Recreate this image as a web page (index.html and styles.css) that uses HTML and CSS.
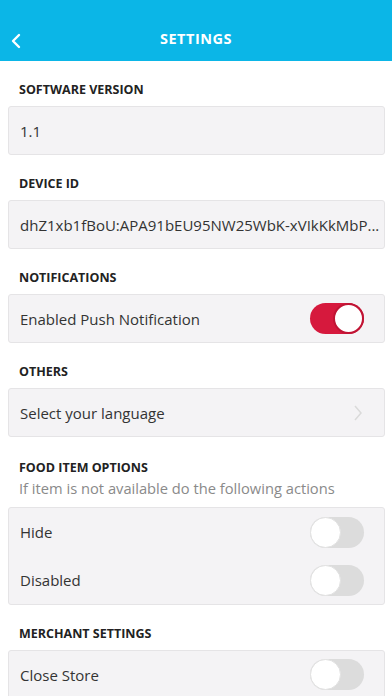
FILE: index.html
```html
<!DOCTYPE html>
<html>
<head>
	<meta charset="utf-8">
	<title>Settings</title>
	<link rel="stylesheet" href="styles.css">
</head>
<body>
	<!-- top bar -->
	<div class="topbar">
		<svg class="back" width="12" height="16" viewBox="0 0 12 16"><path d="M9 2 L3 8 L9 14" fill="none" stroke="#fff" stroke-width="2.4" stroke-linecap="round" stroke-linejoin="round"/></svg>
		<h1>SETTINGS</h1>
	</div>

	<div class="content">
		<div class="label">SOFTWARE VERSION</div>
		<div class="box">
			<div class="row">1.1</div>
		</div>

		<div class="label">DEVICE ID</div>
		<div class="box">
			<div class="row">dhZ1xb1fBoU:APA91bEU95NW25WbK-xVIkKkMbP...</div>
		</div>

		<div class="label">NOTIFICATIONS</div>
		<div class="box">
			<div class="row">Enabled Push Notification <span class="switch on"></span></div>
		</div>

		<div class="label">OTHERS</div>
		<div class="box">
			<div class="row">Select your language
				<svg width="8" height="16" viewBox="0 0 8 16" class="chev"><path d="M1 1 L7 8 L1 15" fill="none" stroke="#dadada" stroke-width="1.5"/></svg>
			</div>
		</div>

		<div class="label with-sub">FOOD ITEM OPTIONS</div>
		<div class="sub">If item is not available do the following actions</div>
		<div class="box multi">
			<div class="row">Hide <span class="switch"></span></div>
			<div class="row">Disabled <span class="switch"></span></div>
		</div>

		<div class="label">MERCHANT SETTINGS</div>
		<div class="box">
			<div class="row">Close Store <span class="switch"></span></div>
		</div>
	</div>
</body>
</html>
```

FILE: styles.css
```css
body{
	margin: 0;
	background: #fff;
	font-family: "Open Sans", "Noto Sans", sans-serif;
	color: #333;
}

/* header */
.topbar{
	height: 61px;
	background-color: #0bb6e7;
	display: flex;
	align-items: center;
	justify-content: center;
	position: relative;
	padding-top: 15px;
	box-sizing: border-box;
}
.topbar h1{
	margin: 0;
	color: #fff;
	font-size: 14.5px;
	font-weight: bold;
	letter-spacing: 0.5px;
}
.back{
	position: absolute;
	left: 10px;
	top: 33px;
}

.content{
	padding: 0 7px 0 8px;
}

.label{
	font-size: 12.5px;
	font-weight: bold;
	color: #222;
	padding: 20px 0 0 11px;
	height: 25px;
	line-height: 17px;
}
.label.with-sub{
	padding-top: 22px;
	height: 19px;
}
.sub{
	font-size: 14.7px;
	color: #8a8a8a;
	padding: 0 0 0 11px;
	height: 29px;
	line-height: 20px;
	white-space: nowrap;
}

.box{
	background-color: #f4f3f5;
	border: 1px solid #e5e4e6;
	border-radius: 3px;
}

.row{
	height: 47px;
	display: flex;
	align-items: center;
	justify-content: space-between;
	padding: 0 20px 0 11px;
	font-size: 15px;
	color: #333;
	white-space: nowrap;
}
.box.multi .row{
	height: 48px;
}
.chev{
	margin-right: 2px;
}

/* toggle switch */
.switch{
	width: 54px;
	height: 31px;
	border-radius: 16px;
	background-color: #dcdcdc;
	position: relative;
	flex-shrink: 0;
}
.switch::after{
	content: "";
	position: absolute;
	left: 0;
	top: 0;
	width: 29px;
	height: 29px;
	border-radius: 50%;
	background: #fff;
	border: 1px solid #e2e2e2;
}
.switch.on{
	background-color: #d6193d;
}
.switch.on::after{
	left: auto;
	right: 0;
	border: 2px solid #c01434;
	width: 27px;
	height: 27px;
}
```
